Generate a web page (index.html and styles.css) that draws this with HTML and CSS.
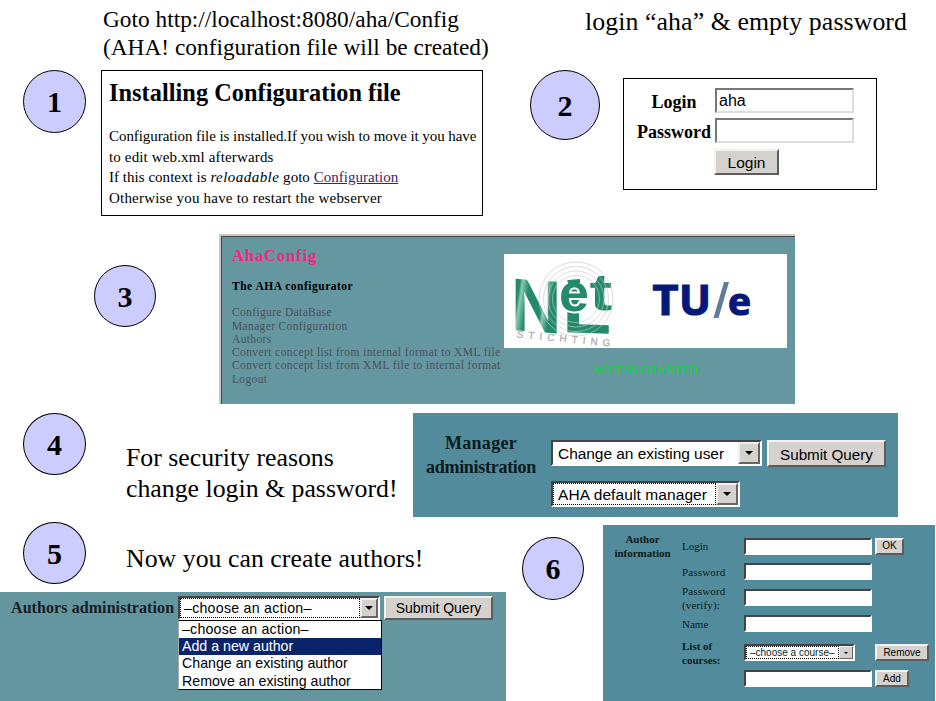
FILE: index.html
```html
<!DOCTYPE html>
<html lang="en">
<head>
<meta charset="utf-8">
<title>AHA! configuration steps</title>
<link rel="stylesheet" href="styles.css">
</head>
<body>
<main class="slide">
  <div class="band band-top">
    <section class="step-install">
      <div class="intro"><div class="intro-1">Goto http://localhost:8080/aha/Config</div><div class="intro-2">(AHA! configuration file will be created)</div></div>
      <div class="step-row">
        <div class="num">1</div>
        <div class="frame install">
          <h1>Installing Configuration file</h1>
          <p class="i1">Configuration file is installed.If you wish to move it you have</p>
          <p class="i2">to edit web.xml afterwards</p>
          <p class="i3">If this context is <em>reloadable</em> goto <a href="#">Configuration</a></p>
          <p class="i4">Otherwise you have to restart the webserver</p>
        </div>
      </div>
    </section>
    <section class="step-login">
      <div class="login-intro">login “aha” &amp; empty password</div>
      <div class="step-row">
        <div class="num num-2">2</div>
        <form class="frame login">
          <label for="u">Login</label><input id="u" class="field" value="aha">
          <label for="p">Password</label><input id="p" class="field">
          <button type="button" class="btn">Login</button>
        </form>
      </div>
    </section>
  </div>

  <section class="band band-config">
    <div class="num num-3">3</div>
    <div class="config">
      <div class="config-menu">
        <h2>AhaConfig</h2>
        <h3>The AHA configurator</h3>
        <ul>
          <li>Configure DataBase</li>
          <li>Manager Configuration</li>
          <li>Authors</li>
          <li class="long">Convert concept list from internal format to XML file</li>
          <li class="long">Convert concept list from XML file to internal format</li>
          <li>Logout</li>
        </ul>
      </div>
      <div class="config-side">
        <svg class="logos" width="283" height="94" viewBox="0 0 283 94">
          <defs>
            <linearGradient id="shade" x1="0" x2="1" y1="0" y2=".25">
              <stop offset="0" stop-color="#238b6b"/><stop offset=".22" stop-color="#238b6b"/><stop offset=".27" stop-color="#8cc8b0"/>
              <stop offset=".4" stop-color="#238b6b"/><stop offset=".68" stop-color="#238b6b"/><stop offset=".73" stop-color="#8cc8b0"/><stop offset=".85" stop-color="#238b6b"/>
            </linearGradient>
          </defs>
          <rect width="283" height="94" fill="#fff"/>
          <g class="logo-sans" font-weight="bold">
            <text transform="matrix(.93 .07 0 1 7 76)" font-size="75" fill="url(#shade)">N</text>
            <text transform="matrix(1.06 .04 0 1 58 78)" font-size="76" fill="#238b6b">L</text>
            <g fill="#238b6b" stroke="#fff" stroke-width="4" paint-order="stroke">
              <text x="55" y="57" font-size="54">e</text>
              <text transform="matrix(1.35 0 0 1 85.500 56)" font-size="51">t</text>
            </g>
            <path d="M64 26L76 25V29L64 30Z" fill="#238b6b"/>
          </g>
          <g fill="none" stroke="#c4ccc8" stroke-width=".8" opacity=".8">
            <circle cx="72" cy="45" r="37"/><circle cx="72" cy="45" r="32.500"/><circle cx="72" cy="45" r="28"/><circle cx="72" cy="45" r="23.500"/>
          </g>
          <text class="logo-sans" transform="translate(12.500 83.500) rotate(5.500)" font-size="10" textLength="94" fill="#b0b0b4" stroke="#b0b0b4" stroke-width=".3">STICHTING</text>
          <g class="logo-humanist" fill="#06187c" stroke="#06187c" stroke-width="1.2" font-weight="bold">
            <text x="148.500" y="60.500" font-size="41" textLength="26" lengthAdjust="spacingAndGlyphs">T</text>
            <text x="175" y="60.500" font-size="41" textLength="32" lengthAdjust="spacingAndGlyphs">U</text>
            <path d="M209.500 64L220 28H225L214.500 64Z" fill="#5f7d98" stroke="none"/>
            <text x="224" y="60.500" font-size="38" textLength="23" lengthAdjust="spacingAndGlyphs">e</text>
          </g>
        </svg>
        <div class="granted">ACCESS GRANTED</div>
      </div>
    </div>
  </section>

  <section class="band band-manager">
    <div class="num num-45">4</div>
    <div class="note note-4"><div>For security reasons</div><div class="tight">change login &amp; password!</div></div>
    <div class="manager">
      <div class="manager-label"><div class="m1">Manager</div><div class="m2">administration</div></div>
      <div class="manager-controls">
        <div class="manager-line">
          <div class="select sel-user"><span>Change an existing user</span><i class="arrow"></i></div>
          <button type="button" class="btn">Submit Query</button>
        </div>
        <div class="select sel-manager"><span class="focus">AHA default manager</span><i class="arrow"></i></div>
      </div>
    </div>
  </section>

  <div class="band band-authors">
    <section class="step-authors">
      <div class="step-row">
        <div class="num num-45">5</div>
        <div class="note note-5">Now you can create authors!</div>
      </div>
      <div class="authors">
        <div class="authors-label">Authors administration</div>
        <div class="dropdown">
          <div class="select sel-action"><span class="focus">–choose an action–</span><i class="arrow"></i></div>
          <ul class="options"><li>–choose an action–</li><li class="on">Add a new author</li><li>Change an existing author</li><li>Remove an existing author</li></ul>
        </div>
        <button type="button" class="btn">Submit Query</button>
      </div>
    </section>
    <div class="num num-6">6</div>
    <section class="info">
      <div class="info-title">Author<br>information</div>
      <div class="info-grid">
        <span>Login</span><input class="field"><button type="button" class="btn ok">OK</button>
        <span class="pw">Password</span><input class="field"><i></i>
        <span class="pw">Password<br>(verify):</span><input class="field"><i></i>
        <span>Name</span><input class="field"><i></i>
        <b>List of<br>courses:</b><div class="select sel-course"><span class="focus">–choose a course–</span><i class="arrow"></i></div><button type="button" class="btn remove">Remove</button>
        <i></i><input class="field"><button type="button" class="btn add">Add</button>
      </div>
    </section>
  </div>
</main>
</body>
</html>
```
FILE: styles.css
```css
* { box-sizing: border-box; }
body { margin: 0; background: #fff; color: #000; font-family: "Liberation Serif", serif; }
h1, h2, h3, p, ul { margin: 0; padding: 0; }
ul { list-style: none; }
.slide { width: 936px; height: 701px; overflow: hidden; }
.slide div, .slide span, .slide p, .slide li { white-space: nowrap; }
.band { display: flex; align-items: flex-start; }
.step-row { display: flex; align-items: flex-start; }

.num {
  flex: none; width: 63px; height: 63px; padding-top: 1px;
  border: 1px solid #000; border-radius: 50%; background: #ccf;
  font-weight: bold; font-size: 30px; line-height: 60px; text-align: center;
}
.frame { border: 1px solid #000; background: #fff; }

/* shared form controls */
.field {
  display: block; margin: 0; padding: 0 2px; border: 2px solid; border-color: #777 #ddd #ddd #777;
  border-radius: 0; background: #fff; outline: 0; color: #000; font-family: "Liberation Sans", sans-serif;
}
.btn {
  display: block; margin: 0; padding: 0; border: 2px solid; border-color: #f4f2ee #5c5c5c #5c5c5c #f4f2ee;
  border-radius: 0; background: #d5d2cd; color: #000; font-family: "Liberation Sans", sans-serif; white-space: nowrap;
}
.select {
  display: flex; border: 2px solid; border-color: #444 #fff #fff #444; background: #fff;
  font-family: "Liberation Sans", sans-serif;
}
.select span { flex: 1; padding-left: 5px; }
.select .focus { border: 1px dotted #000; padding-left: 3px; }
.arrow {
  flex: none; display: flex; align-items: center; justify-content: center; width: 22px;
  border: 2px solid; border-color: #eee #666 #666 #eee; background: #d5d2cd;
}
.arrow::before { content: ""; border: 4px solid transparent; border-top-color: #000; border-bottom: 0; }

/* steps 1 and 2 */
.band-top { height: 234px; }
.step-install { width: 507px; padding: 5px 0 0 23px; }
.intro { height: 65px; padding-left: 80px; font-size: 23.3px; line-height: 28px; }
.intro-1, .intro-2 { letter-spacing: .02px; }
.install { width: 382px; height: 146px; margin-left: 15px; padding: 7px 0 0 7px; font-size: 15px; line-height: 20.6px; }
.install h1 { margin-bottom: 18px; font-size: 24.3px; line-height: 30px; letter-spacing: .05px; }
.i1 { letter-spacing: -.06px; }
.i2 { letter-spacing: .143px; }
.i3 { letter-spacing: .03px; }
.i3 em { letter-spacing: .45px; }
.i4 { letter-spacing: .208px; }
.install a { color: #45206c; }
.step-login { padding: 8px 0 0 23px; }
.login-intro { height: 62px; padding-left: 55px; font-size: 25.8px; line-height: 28px; letter-spacing: .09px; }
.num-2 { width: 70px; height: 70px; line-height: 68px; }
.login {
  display: grid; grid-template: 25px 25px 26px / 76px 139px; row-gap: 5px; column-gap: 3px; align-items: center;
  width: 254px; height: 112px; margin: 8px 0 0 23px; padding: 9px 0 0 12px; align-content: start;
}
.login label { padding-top: 2px; font-size: 18px; line-height: 24px; font-weight: bold; text-align: center; }
.login .field { width: 139px; height: 25px; font-size: 16px; }
.login .btn { grid-column: 2; width: 65px; height: 26px; margin: 1px 0 0 -1px; padding-top: 2px; font-size: 15.5px; }

/* step 3 */
.band-config { height: 179px; padding-left: 94px; }
.num-3 { width: 62px; height: 62px; margin-top: 31px; }
.config {
  display: flex; width: 576px; height: 170px; margin-left: 63px; padding: 10px 0 0 11px;
  border: solid #c8c8c4; border-width: 2px 0 0 2px;
  background: #6597a1; box-shadow: inset 1px 1px #444;
}
.config-menu { width: 272px; }
.config h2 { color: #f0287c; font-size: 16.5px; line-height: 20px; letter-spacing: .9px; }
.config h3 { margin: 14px 0 13px; font-size: 11.5px; line-height: 13.3px; letter-spacing: .5px; }
.config li { color: #48525a; font-size: 11.5px; line-height: 13.25px; letter-spacing: .35px; }
.config li.long { letter-spacing: .4px; }
.config-side { padding-top: 8px; }
.logos { display: block; }
.logo-sans { font-family: "Liberation Sans", sans-serif; }
.logo-humanist { font-family: "Open Sans", sans-serif; }
.granted { margin-top: 15px; color: #00e010; font-size: 12px; line-height: 14px; text-align: center; }

/* step 4 */
.band-manager { height: 109px; padding-left: 23px; }
.num-45 { height: 62px; line-height: 59px; }
.note { font-size: 25.8px; line-height: 30.6px; }
.note-4 { width: 287px; margin: 30px 0 0 40px; }
.manager { display: flex; width: 485px; height: 104px; background: #528b9c; }
.manager-label { width: 136px; padding: 18px 0 0; color: #081c20; font-weight: bold; font-size: 18px; line-height: 24px; text-align: center; }
.m1 { letter-spacing: .289px; }
.m2 { letter-spacing: -.287px; }
.manager-controls { padding: 27px 0 0 2px; font-size: 15.5px; }
.manager-line { display: flex; gap: 5px; }
.manager .select { height: 26px; line-height: 24px; }
.sel-user { width: 211px; letter-spacing: -.05px; }
.manager .btn { width: 119px; height: 27px; padding-top: 1px; font-size: 15.2px; }
.sel-manager { width: 189px; margin-top: 14px; letter-spacing: .09px; }
.manager .focus { padding-left: 4px; line-height: 22px; }

/* step 5 */
.step-authors { width: 506px; }
.step-authors .step-row { height: 70px; padding-left: 23px; }
.note-5 { margin: 22px 0 0 40px; letter-spacing: .03px; }
.authors { display: flex; height: 109px; padding: 4px 0 0 11px; background: #6496a0; }
.authors-label { width: 167px; color: #142024; font-weight: bold; font-size: 16px; line-height: 24px; letter-spacing: .08px; }
.dropdown { position: relative; width: 202px; margin-right: 4px; font-family: "Liberation Sans", sans-serif; font-size: 14.2px; }
.sel-action { height: 24px; line-height: 19px; letter-spacing: .25px; }
.sel-action .arrow { width: 18px; }
.options {
  position: absolute; top: 24px; left: 0; width: 204px; height: 70px; border: 1px solid #000; border-left-color: #aaa;
  background: #fff; line-height: 17.2px;
}
.options li { padding-left: 3px; }
.options li:first-child { letter-spacing: .2px; }
.options .on { background: #0a246a; color: #fff; }
.authors .btn { width: 109px; height: 24px; font-size: 14px; }

/* step 6 */
.num-6 { width: 62px; height: 63px; margin: 15px 0 0 16px; }
.info { display: flex; width: 332px; height: 176px; margin: 3px 0 0 19px; padding-top: 8px; background: #528b9c; color: #081c20; font-size: 11px; line-height: 14px; }
.info-title { width: 79px; font-weight: bold; text-align: center; margin-top: -1px; }
.info-grid {
  display: grid; grid-template: 26px 25.5px 26px 26px 32px 20px / 62px 128px 54px; align-items: center;
  align-content: start;
}
.info-grid .field, .sel-course { height: 17px; width: 128px; border-color: #444 #fff #fff #444; }
.info-grid .btn { height: 17px; margin-left: 3px; font-size: 10px; line-height: 12px; }
.info-grid .ok { width: 29px; }
.info-grid .remove { width: 54px; }
.info-grid .add { width: 34px; }
.info-grid .sel-course { width: 111px; font-size: 10px; line-height: 11px; }
.sel-course .arrow { width: 14px; border-width: 1px; }
.sel-course .arrow::before { border-width: 2px 2px 0; }
.pw { letter-spacing: .15px; }
```
